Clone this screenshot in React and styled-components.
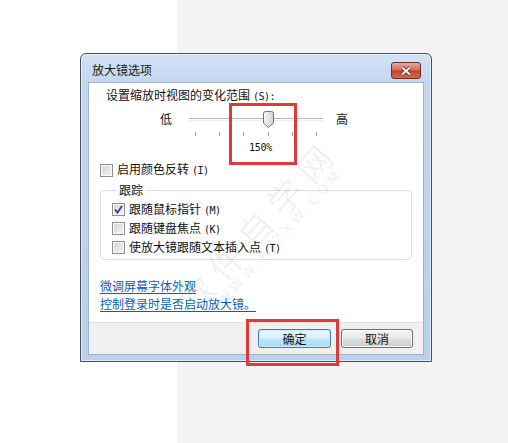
import React from "react";
import styled, { createGlobalStyle } from "styled-components";

const GlobalStyle = createGlobalStyle`
    html, body {
        margin: 0;
        padding: 0;
    }
    body {
        font-family: "Noto Sans CJK SC", "Liberation Sans", sans-serif;
        font-size: 12px;
        color: #111;
    }
`;

const Page = styled.div`
    position: relative;
    width: 508px;
    height: 443px;
    box-sizing: border-box;
    padding: 53px 0 0 80px;
    background: linear-gradient(to right, #ffffff 177px, #f4f4f4 177px);
    overflow: hidden;
`;

const Dialog = styled.div`
    width: 352px;
    height: 309px;
    box-sizing: border-box;
    border: 1px solid #4a4f57;
    border-radius: 6px 6px 0 0;
    background: linear-gradient(180deg, #d3e3f6 0px, #c1d6ef 30px, #b9d1ec 100%);
    display: flex;
    flex-direction: column;
    box-shadow: inset 0 0 0 1px rgba(255, 255, 255, 0.55);
`;

const TitleBar = styled.div`
    height: 28px;
    box-sizing: border-box;
    padding: 8px 10px 0 11px;
    display: flex;
    justify-content: space-between;
    align-items: flex-start;
`;

const Title = styled.span`
    line-height: 16px;
    font-size: 12px;
    color: #1a1a1a;
`;

const CloseButton = styled.div`
    width: 30px;
    height: 17px;
    box-sizing: border-box;
    border: 1px solid #6e2b22;
    border-radius: 3px;
    background: linear-gradient(180deg, #e8a999 0%, #d7705c 45%, #c5442f 52%, #d56b4f 100%);
    display: flex;
    justify-content: center;
    align-items: center;
`;

const Client = styled.div`
    margin: 0 7px;
    width: 336px;
    height: 273px;
    box-sizing: border-box;
    border: 1px solid #9fb4cc;
    background: #ffffff;
    display: flex;
    flex-direction: column;
`;

const Body = styled.div`
    height: 239px;
    padding: 0 11px;
    display: flex;
    flex-direction: column;
`;

const ZoomLabel = styled.div`
    height: 24px;
    line-height: 24px;
    padding-left: 6px;
`;

const SliderRow = styled.div`
    margin-top: 3px;
    height: 18px;
    display: flex;
    align-items: center;
    padding-left: 60px;
`;

const EndLabel = styled.span`
    width: 12px;
    font-size: 12px;
    line-height: 18px;
`;

const Track = styled.div`
    position: relative;
    width: 134px;
    height: 18px;
    margin: 0 13px 0 17px;
    display: flex;
    flex-direction: column;
    justify-content: center;
`;

const TrackLine = styled.div`
    height: 1px;
    border-top: 1px solid #b7b7b7;
    border-bottom: 1px solid #eeeeee;
`;

const Thumb = styled.svg`
    position: absolute;
    top: 1px;
    width: 11px;
    height: 17px;
`;

const TickRow = styled.div`
    margin: 4px 0 0 95px;
    width: 122px;
    height: 4px;
    display: flex;
    justify-content: space-between;
`;

const Tick = styled.span`
    width: 1px;
    height: 4px;
    background: #a4a4a4;
`;

const ValueLabel = styled.div`
    margin: 4px 0 0 149px;
    line-height: 16px;
    font-family: "DejaVu Sans Mono", "Liberation Mono", monospace;
    font-size: 10px;
    letter-spacing: -0.3px;
`;

const CheckRow = styled.label`
    display: flex;
    align-items: center;
    height: ${(p) => p.$h || 19}px;
    margin-top: ${(p) => p.$mt || 0}px;
    gap: 4px;
`;

const Box = styled.span`
    width: 13px;
    height: 13px;
    box-sizing: border-box;
    border: 1px solid #8f8f8f;
    background: linear-gradient(135deg, #d4d4d4 0%, #f4f4f4 100%);
    box-shadow: inset 0 0 0 1px #fafafa;
    display: flex;
    justify-content: center;
    align-items: center;
`;

const CheckText = styled.span`
    line-height: 18px;
    white-space: nowrap;
`;

const Key = styled.span`
    font-family: "DejaVu Sans Mono", "Liberation Mono", monospace;
    font-size: 10px;
    letter-spacing: -0.5px;
    margin-left: 3px;
`;

const Group = styled.fieldset`
    margin: 3px 0 0 0;
    padding: 2px 0 2px 11px;
    border: 1px solid #d5dfe5;
    border-radius: 4px;
    min-width: 0;
`;

const Legend = styled.legend`
    margin-left: 5px;
    padding: 0 3px 0 2px;
    line-height: 16px;
    font-size: 12px;
`;

const LinkList = styled.div`
    margin-top: 17px;
    display: flex;
    flex-direction: column;
    align-items: flex-start;
`;

const Link = styled.a`
    line-height: 18px;
    color: #0a5fb4;
    text-decoration: underline;
    text-underline-offset: 2px;
    cursor: pointer;
`;

const Footer = styled.div`
    flex: 1;
    background: #f0f0f0;
    border-top: 1px solid #e3e3e3;
    display: flex;
    justify-content: flex-end;
    align-items: flex-start;
    gap: 10px;
    padding: 6px 10px 0 0;
`;

const Button = styled.div`
    width: ${(p) => p.$w}px;
    height: 19px;
    box-sizing: border-box;
    border-radius: 3px;
    border: 1px solid ${(p) => (p.$primary ? "#3c7fb1" : "#707070")};
    background: ${(p) =>
        p.$primary
            ? "linear-gradient(180deg, #eaf6fd 0%, #d9f0fc 48%, #bee6fd 52%, #a7d9f5 100%)"
            : "linear-gradient(180deg, #f2f2f2 0%, #ebebeb 48%, #dddddd 52%, #cfcfcf 100%)"};
    box-shadow: inset 0 0 0 1px ${(p) => (p.$primary ? "#c9ecfd" : "#fbfbfb")};
    display: flex;
    justify-content: center;
    align-items: center;
    line-height: 16px;
`;

const Highlight = styled.div`
    position: absolute;
    left: ${(p) => p.$x}px;
    top: ${(p) => p.$y}px;
    width: ${(p) => p.$w}px;
    height: ${(p) => p.$h}px;
    box-sizing: border-box;
    border: 3px solid #e0383c;
    pointer-events: none;
`;

const Watermark = styled.div`
    position: absolute;
    left: ${(p) => p.$x}px;
    top: ${(p) => p.$y}px;
    transform: rotate(-48deg);
    transform-origin: left top;
    white-space: nowrap;
    font-family: ${(p) => p.$font || "inherit"};
    font-size: ${(p) => p.$size}px;
    letter-spacing: ${(p) => p.$spacing}px;
    color: rgba(0, 0, 0, ${(p) => p.$alpha});
    pointer-events: none;
`;

function Check({ checked, label, hotkey, h, mt }) {
    return (
        <CheckRow $h={h} $mt={mt}>
            <Box>
                {checked && (
                    <svg width="9" height="9" viewBox="0 0 9 9">
                        <path d="M1 4.5 L3.5 7.5 L8 1" fill="none" stroke="#2a3f8a" strokeWidth="1.7" />
                    </svg>
                )}
            </Box>
            <CheckText>
                {label}
                <Key>({hotkey})</Key>
            </CheckText>
        </CheckRow>
    );
}

const ticks = [0, 1, 2, 3, 4, 5];
const thumbIndex = 3;

export default function App() {
    return (
        <>
            <GlobalStyle />
            <Page>
                <Dialog>
                    <TitleBar>
                        <Title>放大镜选项</Title>
                        <CloseButton>
                            <svg width="12" height="10" viewBox="0 0 12 10">
                                <path d="M2 1.5 L10 8.5 M10 1.5 L2 8.5" stroke="#5a1c12" strokeWidth="3.6" />
                                <path d="M2 1.5 L10 8.5 M10 1.5 L2 8.5" stroke="#ffffff" strokeWidth="2" />
                            </svg>
                        </CloseButton>
                    </TitleBar>
                    <Client>
                        <Body>
                            <ZoomLabel>
                                设置缩放时视图的变化范围<Key>(S):</Key>
                            </ZoomLabel>
                            <SliderRow>
                                <EndLabel>低</EndLabel>
                                <Track>
                                    <TrackLine />
                                    <Thumb
                                        viewBox="0 0 11 17"
                                        style={{ left: 6 + thumbIndex * 24.4 - 5.5 }}
                                    >
                                        <defs>
                                            <linearGradient id="thumbFill" x1="0" y1="0" x2="1" y2="0">
                                                <stop offset="0" stopColor="#f7f7f7" />
                                                <stop offset="1" stopColor="#d2d2d2" />
                                            </linearGradient>
                                        </defs>
                                        <path
                                            d="M0.5 2.5 Q0.5 0.5 2.5 0.5 H8.5 Q10.5 0.5 10.5 2.5 V12 L5.5 16.5 L0.5 12 Z"
                                            fill="url(#thumbFill)"
                                            stroke="#737373"
                                        />
                                    </Thumb>
                                </Track>
                                <EndLabel>高</EndLabel>
                            </SliderRow>
                            <TickRow>
                                {ticks.map((t) => (
                                    <Tick key={t} />
                                ))}
                            </TickRow>
                            <ValueLabel>150%</ValueLabel>
                            <Check label="启用颜色反转" hotkey="I" h={18} mt={5} />
                            <Group>
                                <Legend>跟踪</Legend>
                                <Check checked label="跟随鼠标指针" hotkey="M" />
                                <Check label="跟随键盘焦点" hotkey="K" />
                                <Check label="使放大镜跟随文本插入点" hotkey="T" />
                            </Group>
                            <LinkList>
                                <Link>微调屏幕字体外观</Link>
                                <Link>控制登录时是否启动放大镜。</Link>
                            </LinkList>
                        </Body>
                        <Footer>
                            <Button $primary $w={73}>确定</Button>
                            <Button $w={72}>取消</Button>
                        </Footer>
                    </Client>
                </Dialog>
                <Watermark $x={166} $y={290} $size={34} $spacing={10} $alpha={0.06}>
                    软件自学网
                </Watermark>
                <Watermark
                    $x={214}
                    $y={298}
                    $size={14}
                    $spacing={4}
                    $alpha={0.08}
                    $font={'"DejaVu Sans", sans-serif'}
                >
                    WWW.RJZXW.COM
                </Watermark>
                <Highlight $x={229} $y={103} $w={68} $h={62} />
                <Highlight $x={246} $y={319} $w={93} $h={47} />
            </Page>
        </>
    );
}
